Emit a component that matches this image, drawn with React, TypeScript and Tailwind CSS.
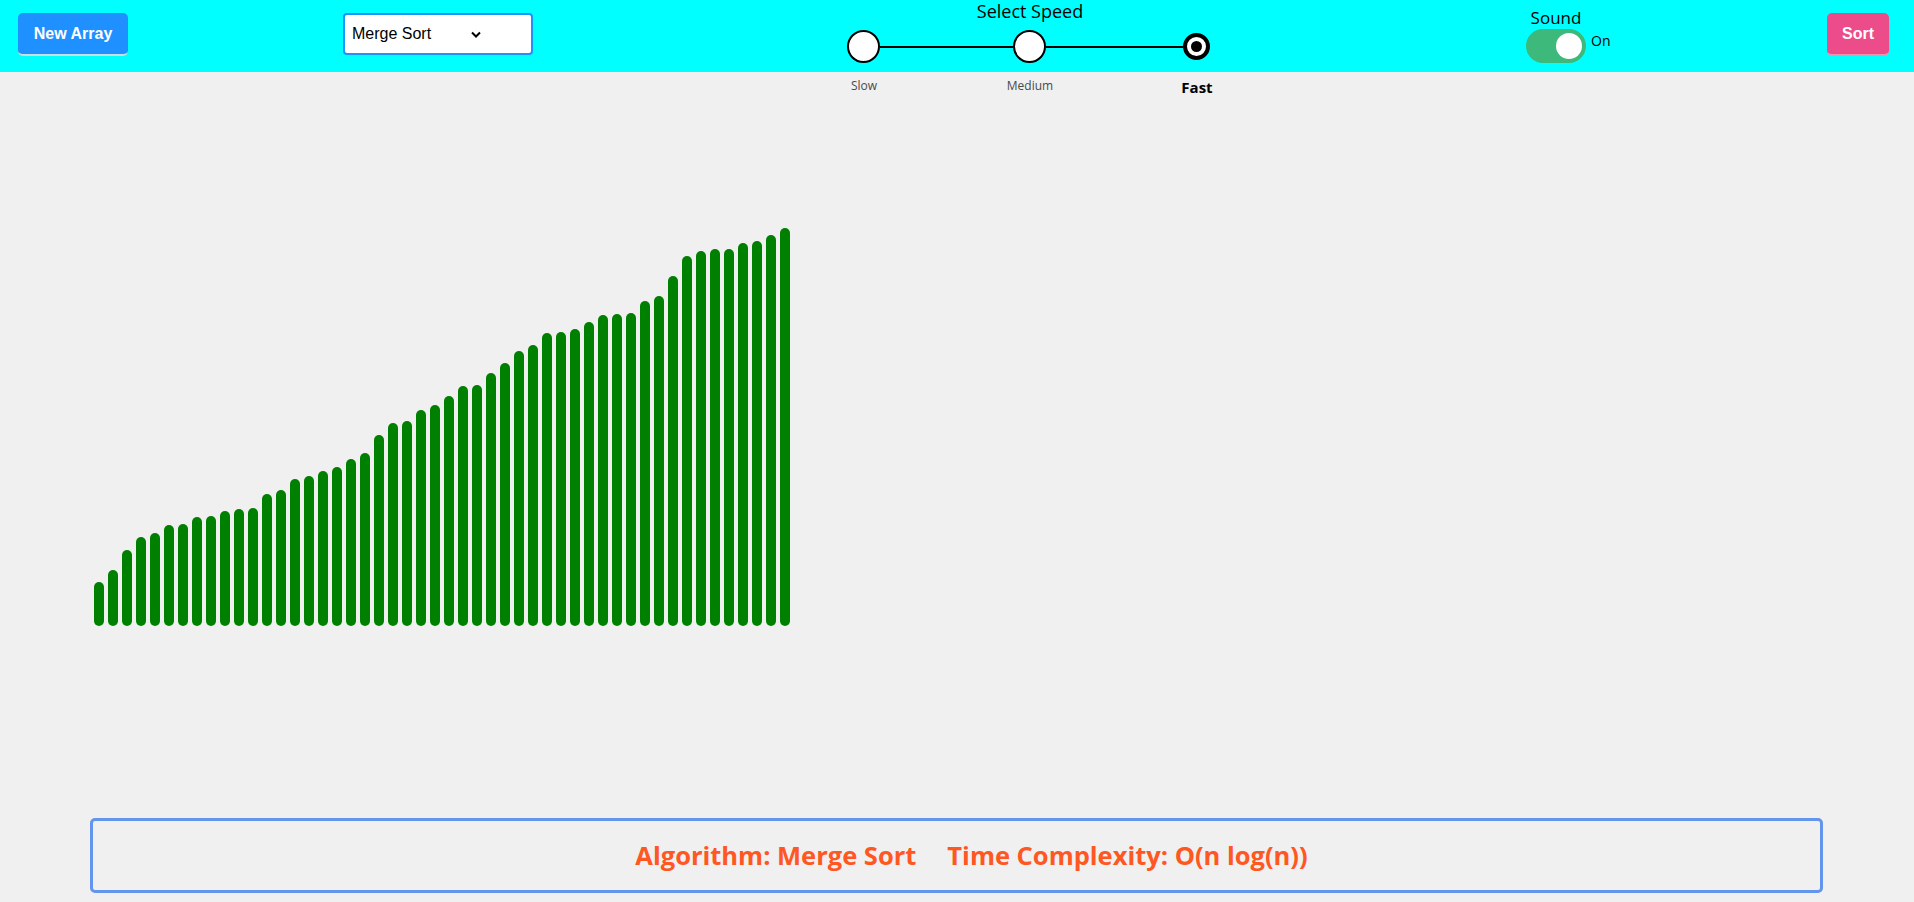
import React from "react";

const HEIGHTS = [
  44, 56, 76, 89, 93, 101, 102, 109, 110, 115,
  117, 118, 132, 136, 147, 150, 155, 159, 167, 173,
  191, 203, 205, 216, 221, 230, 240, 241, 253, 263,
  275, 281, 293, 294, 297, 304, 311, 312, 313, 325,
  330, 350, 370, 375, 377, 377, 383, 385, 391, 398,
];

export default function App() {
  return (
    <div className="min-h-screen w-full bg-[#f0f0f0] font-['Open_Sans',sans-serif] text-black overflow-hidden">
      {/* Header */}
      <div className="flex h-[72px] items-start bg-[#00ffff]">
        <button className="ml-[18px] mt-[13px] h-[43px] w-[110px] rounded-[5px] border-b-2 border-[#c9dede] bg-[#1e90ff] font-['Liberation_Sans',Arial,sans-serif] text-[16px] font-bold text-white">
          New Array
        </button>

        <div className="ml-[215px] mt-[13px] flex h-[42px] w-[190px] items-center rounded-[4px] border-2 border-[#1e90ff] bg-white pl-[7px] font-['Liberation_Sans',Arial,sans-serif] text-[16px]">
          <span className="w-[119px]">Merge Sort</span>
          <svg width="10" height="7" viewBox="0 0 10 7">
            <path d="M1 1.5 L5 5.5 L9 1.5" fill="none" stroke="#000" strokeWidth="2" />
          </svg>
        </div>

        {/* Speed selector */}
        <div className="ml-[287px] flex w-[420px] flex-col">
          <div className="pt-[1px] text-center text-[18px] leading-[20px]">Select Speed</div>
          <div className="mt-[9px] flex items-center pl-[27px]">
            <div className="h-[33px] w-[33px] rounded-full border-2 border-black bg-white" />
            <div className="h-[2px] w-[133px] bg-black" />
            <div className="h-[33px] w-[33px] rounded-full border-2 border-black bg-white" />
            <div className="h-[2px] w-[137px] bg-black" />
            <div className="flex h-[27px] w-[27px] items-center justify-center rounded-full border-[4px] border-black bg-white">
              <div className="h-[11px] w-[11px] rounded-full bg-black" />
            </div>
          </div>
          <div className="mt-[16px] flex items-start pl-[4px]">
            <div className="w-[80px] text-center text-[12px] leading-[14px] text-[#4a4a4a]">Slow</div>
            <div className="ml-[86px] w-[80px] text-center text-[12px] leading-[14px] text-[#4a4a4a]">Medium</div>
            <div className="ml-[87px] w-[80px] text-center text-[15px] font-bold leading-[16px]">Fast</div>
          </div>
        </div>

        {/* Sound */}
        <div className="ml-[286px] mt-[8px] flex flex-col">
          <div className="w-[60px] text-center text-[17px] leading-[20px]">Sound</div>
          <div className="mt-[1px] flex items-start">
            <div className="flex h-[34px] w-[60px] items-center justify-end rounded-full bg-[#3cb97b] pr-[4px]">
              <div className="h-[26px] w-[26px] rounded-full bg-white" />
            </div>
            <span className="ml-[5px] mt-[3px] text-[14px] leading-[18px]">On</span>
          </div>
        </div>

        <button className="ml-auto mr-[25px] mt-[13px] h-[43px] w-[62px] rounded-[5px] border-b-2 border-[#f08fb2] bg-[#ec4c8a] font-['Liberation_Sans',Arial,sans-serif] text-[16px] font-bold text-white">
          Sort
        </button>
      </div>

      {/* Bars */}
      <div className="flex h-[554px] items-end gap-[4px] pl-[94px]">
        {HEIGHTS.map((h, i) => (
          <div key={i} className="w-[10px] rounded-full bg-[#008000]" style={{ height: h }} />
        ))}
      </div>

      {/* Info box */}
      <div className="ml-[90px] mt-[192px] flex h-[75px] w-[1733px] items-center justify-center rounded-[5px] border-[3px] border-[#6495ed] pl-[30px] text-[25.5px] font-bold text-[#ff5722]">
        <span>Algorithm: Merge Sort</span>
        <span className="ml-[31px]">Time Complexity: O(n log(n))</span>
      </div>
    </div>
  );
}
